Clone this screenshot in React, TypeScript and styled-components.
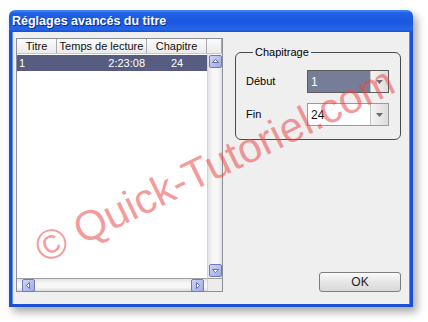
import React from 'react';
import styled, { createGlobalStyle } from 'styled-components';

const GlobalStyle = createGlobalStyle`
    html, body {
        margin: 0;
        padding: 0;
        background: #ffffff;
    }
    body {
        font-family: 'Liberation Sans', Arial, sans-serif;
        font-size: 11px;
        color: #000;
    }
`;

const Page = styled.div`
    width: 428px;
    height: 322px;
    padding: 10px 0 0 9px;
    box-sizing: border-box;
`;

const Window = styled.div`
    position: relative;
    width: 404px;
    height: 297px;
    display: flex;
    flex-direction: column;
    border-radius: 6px 6px 0 0;
    box-shadow: 4px 5px 8px rgba(0, 0, 0, 0.35);
    overflow: hidden;
`;

const TitleBar = styled.div`
    height: 22px;
    flex: none;
    display: flex;
    align-items: center;
    padding-left: 3px;
    background: linear-gradient(
        to bottom,
        #4a8cf5 0%,
        #1f62e6 14%,
        #1a58df 55%,
        #2466e8 88%,
        #1a50d0 100%
    );
    color: #fff;
    font-weight: bold;
    font-size: 12.5px;
    text-shadow: 1px 1px 0 #0a2a8a;
`;

const Body = styled.div`
    flex: 1;
    display: grid;
    grid-template-columns: 207px 1fr;
    column-gap: 12px;
    padding: 6px 9px 12px 4px;
    background: #efefef;
    border: 3px solid #1c4fd8;
    border-top: none;
    box-shadow: inset 1px 0 0 #5b8af0, inset -1px 0 0 #5b8af0;
`;

/* ---- list view ---- */

const ListFrame = styled.div`
    display: grid;
    grid-template-columns: 1fr 15px;
    grid-template-rows: 15px 1fr 13px;
    border: 1px solid #8a8f98;
    background: #fff;
    min-height: 0;
`;

const HeaderRow = styled.div`
    grid-column: 1 / 3;
    display: grid;
    grid-template-columns: 40px 90px 60px 15px;
    background: linear-gradient(to bottom, #fbfbfb, #ebebeb);
    border-bottom: 1px solid #c9c9c9;
`;

const HeaderCell = styled.div`
    display: flex;
    align-items: center;
    justify-content: center;
    border-right: 1px solid #a9a9a9;
    color: #111;
    line-height: 14px;
`;

const Rows = styled.div`
    padding-top: 1px;
`;

const Row = styled.div<{ selected?: boolean }>`
    display: grid;
    grid-template-columns: 40px 90px 60px;
    height: 16px;
    align-items: center;
    background: ${p => (p.selected ? '#565d80' : 'transparent')};
    color: ${p => (p.selected ? '#fff' : '#000')};
`;

const Cell = styled.div<{ align: 'left' | 'right' | 'center' }>`
    text-align: ${p => p.align};
    padding: ${p => (p.align === 'left' ? '0 0 0 2px' : p.align === 'right' ? '0 2px 0 0' : '0')};
`;

const VScroll = styled.div`
    display: flex;
    flex-direction: column;
    justify-content: space-between;
    align-items: center;
    padding: 1px 0;
    background: linear-gradient(to right, #e3e3e3, #f7f7f7 35%, #f7f7f7 70%, #e2e2e2);
    border-left: 1px solid #d4d4d4;
`;

const HScroll = styled.div`
    display: flex;
    justify-content: space-between;
    align-items: center;
    padding: 0 3px 0 5px;
    background: linear-gradient(to bottom, #e3e3e3, #f7f7f7 35%, #f7f7f7 70%, #dcdcdc);
    border-top: 1px solid #a0a0a0;
`;

const Corner = styled.div`
    background: #ececec;
    border-top: 1px solid #a0a0a0;
    border-left: 1px solid #d4d4d4;
`;

const ScrollButton = styled.div`
    width: 11px;
    height: 11px;
    border: 1px solid #6f79bf;
    border-radius: 2px;
    background: linear-gradient(to bottom right, #cdd5f7, #9faae4);
    display: flex;
    align-items: center;
    justify-content: center;
`;

type Dir = 'up' | 'down' | 'left' | 'right';

const arrowPoints: Record<Dir, string> = {
    up: '1.5,5.5 4.5,2.5 7.5,5.5',
    down: '1.5,3.5 4.5,6.5 7.5,3.5',
    left: '5.5,1.5 2.5,4.5 5.5,7.5',
    right: '3.5,1.5 6.5,4.5 3.5,7.5',
};

const Arrow = ({ dir }: { dir: Dir }) => (
    <ScrollButton>
        <svg width="9" height="9" viewBox="0 0 9 9">
            <polygon points={arrowPoints[dir]} fill="#fff" stroke="#4d5590" strokeWidth="0.8" />
        </svg>
    </ScrollButton>
);

/* ---- right side ---- */

const Side = styled.div`
    display: flex;
    flex-direction: column;
    justify-content: space-between;
    align-items: stretch;
    padding-top: 8px;
`;

const GroupBox = styled.fieldset`
    margin: 0;
    padding: 11px 11px 13px 10px;
    border: 1px solid #4a4a4a;
    border-radius: 6px;
    display: grid;
    grid-template-columns: 1fr 82px;
    row-gap: 10px;
    align-items: center;
`;

const Legend = styled.legend`
    margin-left: 7px;
    padding: 0 2px;
    font-size: 11px;
    line-height: 13px;
`;

const FieldLabel = styled.span`
    font-size: 11px;
    padding-bottom: 2px;
`;

const Combo = styled.div<{ active?: boolean }>`
    height: 21px;
    display: flex;
    border: 1px solid ${p => (p.active ? '#5b5b5b' : '#9a9a9a')};
    background: ${p => (p.active ? '#767d96' : '#fff')};
`;

const ComboText = styled.div<{ active?: boolean }>`
    flex: 1;
    display: flex;
    align-items: center;
    padding-left: 3px;
    font-size: 12px;
    color: ${p => (p.active ? '#fff' : '#111')};
`;

const ComboButton = styled.div`
    width: 17px;
    display: flex;
    align-items: center;
    justify-content: center;
    background: linear-gradient(to right, #f4f4f4, #dcdcdc);
    border-left: 1px solid #c4c4c4;
`;

const Footer = styled.div`
    display: flex;
    justify-content: flex-end;
`;

const OkButton = styled.button`
    width: 82px;
    height: 20px;
    border: 1px solid #7e7e7e;
    border-radius: 3px;
    background: linear-gradient(to bottom, #fbfbfb, #e6e6e6 50%, #d9d9d9);
    font-family: 'Liberation Sans', Arial, sans-serif;
    font-size: 12px;
    color: #222;
    padding: 0;
`;

const Watermark = styled.div`
    position: absolute;
    left: 38px;
    top: 218px;
    transform: rotate(-26deg);
    transform-origin: 0 100%;
    font-family: 'Liberation Sans', Arial, sans-serif;
    font-size: 42px;
    line-height: 42px;
    white-space: nowrap;
    color: rgba(236, 70, 70, 0.55);
    pointer-events: none;
`;

const DropArrow = () => (
    <svg width="9" height="6" viewBox="0 0 9 6">
        <polygon points="1,1 8,1 4.5,5" fill="#6a6a6a" />
    </svg>
);

const chapters = [{ titre: '1', duree: '2:23:08', chapitre: '24' }];

export default function App() {
    return (
        <Page>
            <GlobalStyle />
            <Window>
                <TitleBar>Réglages avancés du titre</TitleBar>
                <Body>
                    <ListFrame>
                        <HeaderRow>
                            <HeaderCell>Titre</HeaderCell>
                            <HeaderCell>Temps de lecture</HeaderCell>
                            <HeaderCell>Chapitre</HeaderCell>
                            <HeaderCell />
                        </HeaderRow>
                        <Rows>
                            {chapters.map(c => (
                                <Row key={c.titre} selected>
                                    <Cell align="left">{c.titre}</Cell>
                                    <Cell align="right">{c.duree}</Cell>
                                    <Cell align="center">{c.chapitre}</Cell>
                                </Row>
                            ))}
                        </Rows>
                        <VScroll>
                            <Arrow dir="up" />
                            <Arrow dir="down" />
                        </VScroll>
                        <HScroll>
                            <Arrow dir="left" />
                            <Arrow dir="right" />
                        </HScroll>
                        <Corner />
                    </ListFrame>
                    <Side>
                        <GroupBox>
                            <Legend>Chapitrage</Legend>
                            <FieldLabel>Début</FieldLabel>
                            <Combo active>
                                <ComboText active>1</ComboText>
                                <ComboButton>
                                    <DropArrow />
                                </ComboButton>
                            </Combo>
                            <FieldLabel>Fin</FieldLabel>
                            <Combo>
                                <ComboText>24</ComboText>
                                <ComboButton>
                                    <DropArrow />
                                </ComboButton>
                            </Combo>
                        </GroupBox>
                        <Footer>
                            <OkButton>OK</OkButton>
                        </Footer>
                    </Side>
                </Body>
                <Watermark>© Quick-Tutoriel.com</Watermark>
            </Window>
        </Page>
    );
}
